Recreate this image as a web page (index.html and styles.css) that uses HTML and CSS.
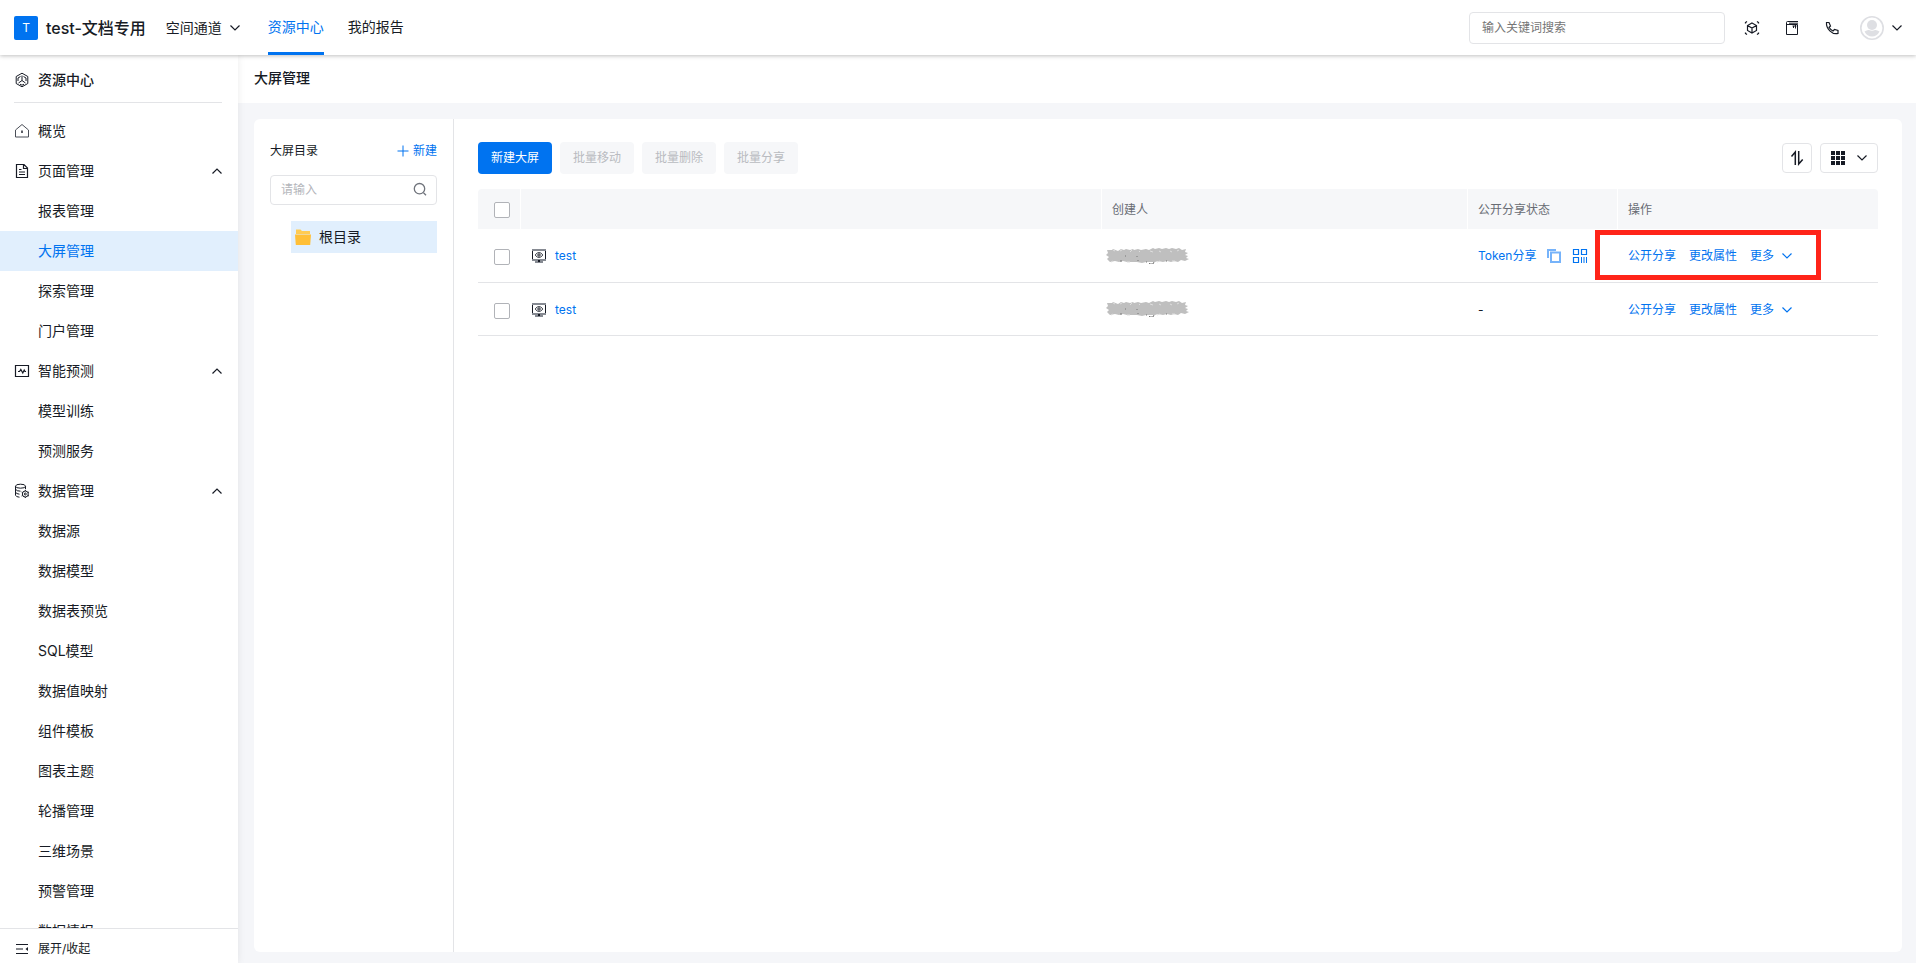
FILE: index.html
```html
<!DOCTYPE html>
<html lang="zh-CN">
<head>
<meta charset="utf-8">
<title>大屏管理</title>
<link rel="stylesheet" href="styles.css">
</head>
<body>
<svg class="sprite" aria-hidden="true">
  <symbol id="down" viewBox="0 0 12 12"><path d="M1.500 3.500 6 8l4.500-4.500"/></symbol>
  <symbol id="up" viewBox="0 0 12 12"><path d="M1.500 8.500 6 4l4.500 4.500"/></symbol>
  <symbol id="screen" viewBox="0 0 16 16"><path d="M1.500 2v10h13V2"/><path d="M1 2h14" stroke="#868a92" stroke-width="2"/><path d="M1 11h14v2h-3v2H4v-2H1z" fill="#868a92" stroke="none"/><path d="M7 12h2v2H7z" fill="#171b25" stroke="none"/><path d="M4.300 7C6 3.800 10 3.800 11.700 7 10 10.200 6 10.200 4.300 7z" stroke="#3b3f48"/><circle cx="8" cy="7" r="1.200"/></symbol>
  <symbol id="scribble" viewBox="0 0 84 16">
    <path fill="#bfbfbf" stroke="none" d="M1 2 6 2l1-1 5 2 3-2 3 1 2-1 4 1 3-1 1 1 4-1 3 1 5-1 3 1 4-2 2 1 4-1 3 1 4-1 3 1 3-1 4 1 3-1 3 2 4-1-1 3 3 1-3 2 3 1-2 2 3 1-4 2-4-1-3 2-4-1-3 1-4-1-4 1-5-1-3 1-4 0-5 0-4 1-5-1-4 0-6 0-4-1-4 1-4-1-5 1-3-3 2-2-3-2 2-2z"/>
    <path stroke="#dedede" d="m7 2 2 1m5 0 2-1m8 2 2-2m7 1 1 1m10-1 3 1m6-1 2 1m9-1 2 1m5-1 2-1M5 14l2-1m14 1 3 0m27 0 3-1m12 0 3 0"/>
    <path stroke="#777" d="M14 13h2m3-5h1m11 0v1m1 3v1m8 1h1m2 1 1 1h3l1-2m12-1h1"/>
  </symbol>
</svg>

<header class="topbar">
  <span class="logo">T</span>
  <span class="brand">test-文档专用</span>
  <button class="space" type="button">空间通道<svg class="icon s12"><use href="#down"/></svg></button>
  <nav class="tabs">
    <a class="tab on" href="#">资源中心</a>
    <a class="tab" href="#">我的报告</a>
  </nav>
  <input class="search" type="text" placeholder="输入关键词搜索" aria-label="输入关键词搜索">
  <div class="tools">
    <button type="button" aria-label="三维"><svg class="icon s16" viewBox="0 0 16 16"><path d="M1.500 3.500V2.500L3 1.500M13 1.500l1.500 1V3.500M1.500 12.500v1l1.500 1M13 14.500l1.500-1V12.500" stroke-width="1.300"/><path d="M8 3l4.500 2.500v5L8 13l-4.500-2.500v-5zM3.500 5.500 8 8l4.500-2.500M8 8v5" stroke-width="1.200"/></svg></button>
    <button type="button" aria-label="文档"><svg class="icon s16" viewBox="0 0 16 16"><path d="M14 1.500H3.500Q2.500 1.500 2.500 2.500v12h11v-10H3M5 3.200h9"/><path d="M8.500 6h4M9.500 8V6M11.500 8.500V5"/></svg></button>
    <button type="button" aria-label="电话"><svg class="icon s16" viewBox="0 0 16 16"><path d="M2.500 2.500h2.500l1.500 3.500-1.500 1.300q1.400 2.400 4 3.700l1.500-1.500 3.500 1v3Q9.500 14.500 5.800 10.800T2.500 2.500z" stroke-width="1.200"/></svg></button>
  </div>
  <button class="user" type="button" aria-label="用户"><svg class="s24" viewBox="0 0 24 24"><circle cx="12" cy="12" r="11.200" fill="#fff" stroke="#dedfe3" stroke-width="1.600"/><circle cx="12" cy="9" r="5" fill="#dedfe3"/><path d="M4.500 15.500q3-2 4.500-1.500 3 1.500 6 0 1.500-.5 4.500 1.500-2.500 5-7.500 5t-7.500-5z" fill="#dedfe3"/></svg><svg class="icon s12"><use href="#down"/></svg></button>
</header>

<div class="body">
  <aside class="side">
    <div class="side-title">
      <svg class="icon s16" viewBox="0 0 16 16"><path d="M8 1.200 13.800 4.500v7L8 14.800 2.200 11.500v-7zM8 3.500V8.500L4.500 11M8 8.500 11.500 11M6.500 4.500 4 6v3M9.500 4.500 12 6v3M6 12.200l2 1 2-1"/></svg>
      <h2>资源中心</h2>
    </div>
    <nav class="menu">
      <a class="item" href="#"><svg class="icon s16" viewBox="0 0 16 16"><path d="M1.500 7 8 1.500 14.500 7v7h-13z" stroke="#4b4f58"/><path d="M8 7.500v2.500" stroke-width="1.400"/></svg>概览</a>
      <a class="item" href="#"><svg class="icon s16" viewBox="0 0 16 16"><path d="M2.500 1.500h7.500l3.500 3.500v9.500h-11zM9.500 1.500v4h4M5 6.500h2.500M5 9h6M5 11.500h6" stroke-width="1.200"/></svg>页面管理<svg class="icon s12 fold"><use href="#up"/></svg></a>
      <a class="item sub" href="#">报表管理</a>
      <a class="item sub on" href="#">大屏管理</a>
      <a class="item sub" href="#">探索管理</a>
      <a class="item sub" href="#">门户管理</a>
      <a class="item" href="#"><svg class="icon s16" viewBox="0 0 16 16"><path d="M1.500 2.500h13v11h-13zM4 8.500h1.500l1.300-2 2 3.500 1.400-3 .8 1.500h1" stroke-width="1.200"/></svg>智能预测<svg class="icon s12 fold"><use href="#up"/></svg></a>
      <a class="item sub" href="#">模型训练</a>
      <a class="item sub" href="#">预测服务</a>
      <a class="item" href="#"><svg class="icon s16" viewBox="0 0 16 16"><ellipse cx="6.500" cy="3.200" rx="5" ry="2"/><path d="M1.500 3.200v9q.5 1.800 4 2M11.500 3.200v3M1.500 6.200q1 2 5 2M1.500 9.200q1 1.800 4 2"/><circle cx="11.300" cy="11" r="3"/><circle cx="11.300" cy="11" r="1"/><path d="M11.300 7v1M11.300 14v1M7.600 9l1 .5M14 12.500l1 .5M7.600 13l1-.5M14 9.500l1-.5"/></svg>数据管理<svg class="icon s12 fold"><use href="#up"/></svg></a>
      <a class="item sub" href="#">数据源</a>
      <a class="item sub" href="#">数据模型</a>
      <a class="item sub" href="#">数据表预览</a>
      <a class="item sub" href="#">SQL模型</a>
      <a class="item sub" href="#">数据值映射</a>
      <a class="item sub" href="#">组件模板</a>
      <a class="item sub" href="#">图表主题</a>
      <a class="item sub" href="#">轮播管理</a>
      <a class="item sub" href="#">三维场景</a>
      <a class="item sub" href="#">预警管理</a>
      <a class="item sub" href="#">数据情报</a>
    </nav>
    <button class="collapse" type="button"><svg class="icon s16" viewBox="0 0 16 16"><path d="M2 3.500h12M2 8h7M2 12.500h12" stroke-width="1.200"/><path d="M14 6v4L11.500 8z" fill="#171b25" stroke="none"/></svg>展开/收起</button>
  </aside>

  <main class="main">
    <h1 class="page-title">大屏管理</h1>
    <div class="card">
      <section class="tree">
        <div class="tree-head">
          <h3>大屏目录</h3>
          <button class="link add" type="button"><svg class="icon s12" viewBox="0 0 12 12"><path d="M6 .5v11M.5 6h11"/></svg>新建</button>
        </div>
        <div class="filter">
          <input type="text" placeholder="请输入" aria-label="请输入">
          <svg class="icon s16" viewBox="0 0 16 16"><circle cx="7.500" cy="6.700" r="5.200"/><path d="m11.500 10.700 2.500 2.500"/></svg>
        </div>
        <a class="node" href="#"><svg class="s16" viewBox="0 0 16 16"><path d="M1 .5h4.500L7 2h8v3H1z" fill="#ffcb52"/><path d="M0 5.500h16L15.200 16H.8z" fill="#ffbf37"/></svg>根目录</a>
      </section>
      <section class="content">
        <div class="toolbar">
          <button class="btn primary" type="button">新建大屏</button>
          <button class="btn" type="button" disabled>批量移动</button>
          <button class="btn" type="button" disabled>批量删除</button>
          <button class="btn" type="button" disabled>批量分享</button>
          <button class="tool first" type="button" aria-label="排序"><svg class="icon s16" viewBox="0 0 16 16"><path d="M6.300 15V2L2.500 6.500M9.700 1v13l4-4.500" stroke-width="1.500"/></svg></button>
          <button class="tool view" type="button" aria-label="视图"><svg class="s16" viewBox="0 0 16 16" fill="#171b25"><path d="M1 1h4v4H1zM6 1h4v4H6zM11 1h4v4h-4zM1 6h4v4H1zM6 6h4v4H6zM11 6h4v4h-4zM1 11h4v4H1zM6 11h4v4H6zM11 11h4v4h-4z"/></svg><svg class="icon s12"><use href="#down"/></svg></button>
        </div>
        <table class="grid">
          <colgroup><col class="c-check"><col><col class="c-owner"><col class="c-state"><col class="c-ops"></colgroup>
          <thead>
            <tr><th><input type="checkbox" aria-label="全选"></th><th></th><th>创建人</th><th>公开分享状态</th><th>操作</th></tr>
          </thead>
          <tbody>
            <tr>
              <td><input type="checkbox" aria-label="选择 test"></td>
              <td><a class="name" href="#"><svg class="icon s16"><use href="#screen"/></svg>test</a></td>
              <td class="owner"><svg class="icon masked"><use href="#scribble"/></svg></td>
              <td><div class="state"><a href="#">Token分享</a><svg class="s16" viewBox="0 0 16 16"><path d="M1 1h9v2H3v7H1z" fill="#76b3fa"/><path d="M5 4.500h9V14H5z" fill="none" stroke="#76b3fa" stroke-width="2"/></svg><svg class="icon s16" viewBox="0 0 16 16"><path d="M1.500 1.500h5v5h-5zM9.500 1.500h5v5h-5zM1.500 9.500h5v5h-5z" stroke-width="1.200"/><path d="M9.500 9v6M12 9v6M14.500 9v6"/></svg></div></td>
              <td class="marked"><div class="ops"><a href="#">公开分享</a><a href="#">更改属性</a><button class="link" type="button">更多<svg class="icon s12"><use href="#down"/></svg></button></div></td>
            </tr>
            <tr>
              <td><input type="checkbox" aria-label="选择 test"></td>
              <td><a class="name" href="#"><svg class="icon s16"><use href="#screen"/></svg>test</a></td>
              <td class="owner"><svg class="icon masked"><use href="#scribble"/></svg></td>
              <td>-</td>
              <td><div class="ops"><a href="#">公开分享</a><a href="#">更改属性</a><button class="link" type="button">更多<svg class="icon s12"><use href="#down"/></svg></button></div></td>
            </tr>
          </tbody>
        </table>
      </section>
    </div>
  </main>
</div>
</body>
</html>
```
FILE: styles.css
```css
*, *::before, *::after { box-sizing: border-box; }
body {
  margin: 0;
  height: 100vh;
  display: flex;
  flex-direction: column;
  overflow: hidden;
  font: 12px/20px Inter, "Noto Sans CJK SC", sans-serif;
  color: #171b25;
  background: #f5f6f9;
}
h1, h2, h3 { margin: 0; font-weight: 500; }
a { color: inherit; text-decoration: none; }
button { margin: 0; padding: 0; border: 0; background: none; font: inherit; color: inherit; cursor: pointer; }
input { font: inherit; color: inherit; outline: 0; }
svg { display: block; flex: none; }
.sprite { position: absolute; width: 0; height: 0; }
.icon { fill: none; stroke: currentColor; }
.s12 { width: 12px; height: 12px; stroke-width: 1.2; }
.s16 { width: 16px; height: 16px; }
.s24 { width: 24px; height: 24px; }

.topbar {
  position: relative;
  z-index: 2;
  flex: none;
  display: flex;
  align-items: center;
  height: 55px;
  padding: 0 13px 0 14px;
  background: #fff;
  box-shadow: 0 1px 4px rgba(0, 0, 0, .25);
}
.logo {
  width: 24px;
  height: 24px;
  border-radius: 2px;
  background: #0073f0;
  color: #fff;
  line-height: 24px;
  text-align: center;
}
.brand { margin-left: 8px; font-size: 16px; font-weight: 500; }
.space { display: flex; align-items: center; gap: 7px; margin-left: 20px; font-size: 14px; }
.tabs { display: flex; gap: 24px; margin-left: 27px; align-self: stretch; font-size: 14px; }
.tab { line-height: 52px; padding-top: 1px; height: 55px; border-bottom: 3px solid transparent; }
.tab.on { color: #0073f0; border-color: #0073f0; }
.search {
  width: 256px;
  height: 32px;
  margin-left: auto;
  padding: 0 12px;
  border: 1px solid #e3e4e7;
  border-radius: 4px;
}
.search::placeholder { color: #757575; }
.tools { display: flex; gap: 24px; margin: 0 20px 0 19px; }
.user { display: flex; align-items: center; gap: 7px; }

.body { flex: 1; display: flex; min-height: 0; }
.side {
  position: relative;
  z-index: 1;
  flex: none;
  display: flex;
  flex-direction: column;
  width: 238px;
  background: #fff;
  box-shadow: 0 0 8px rgba(0, 0, 0, .08);
}
.side-title {
  display: flex;
  align-items: center;
  gap: 8px;
  height: 48px;
  margin: 0 16px 8px 14px;
  padding-top: 2px;
  border-bottom: 1px solid #e3e4e7;
}
.side-title h2 { font-size: 14px; }
.menu { flex: 1; min-height: 0; overflow: hidden; font-size: 14px; }
.item { display: flex; align-items: center; gap: 8px; height: 40px; padding: 0 15px 0 14px; }
.item.sub { padding-left: 38px; }
.item.on { color: #0073f0; background: #e1effd; }
.item .fold { margin: 0 0 0 auto; }
.collapse {
  display: flex;
  align-items: center;
  gap: 8px;
  height: 35px;
  padding: 6px 14px 0;
  border-top: 1px solid #e3e4e7;
}

.main { flex: 1; min-width: 0; display: flex; flex-direction: column; }
.page-title { height: 48px; padding-left: 16px; background: #fff; font-size: 14px; line-height: 46px; }
.card {
  flex: 1;
  min-height: 0;
  display: flex;
  margin: 16px 14px 11px 16px;
  border-radius: 6px;
  background: #fff;
}
.tree { flex: none; width: 200px; padding: 22px 16px; border-right: 1px solid #e3e4e7; }
.tree-head { display: flex; align-items: center; justify-content: space-between; }
.tree-head h3 { font-size: 12px; font-weight: 400; }
.link { display: flex; align-items: center; color: #0073f0; }
.add { gap: 4px; }
.add .icon { stroke-width: 1; }
.filter {
  display: flex;
  align-items: center;
  height: 30px;
  margin: 14px 0 16px;
  padding: 0 8px 0 10px;
  border: 1px solid #e3e4e7;
  border-radius: 4px;
}
.filter input { flex: 1; min-width: 0; padding: 0; border: 0; }
.filter input::placeholder { color: #b4b6bb; }
.filter .icon { color: #6f737b; stroke-width: 1.3; }
.node {
  display: flex;
  align-items: center;
  gap: 8px;
  height: 32px;
  margin-left: 21px;
  padding: 0 4px;
  background: #e1effd;
  font-size: 14px;
}

.content { flex: 1; min-width: 0; padding: 23px 24px; }
.toolbar { display: flex; align-items: center; gap: 8px; margin-bottom: 15px; }
.btn { height: 32px; padding: 0 13px; border-radius: 4px; }
.btn.primary { background: #0073f0; color: #fff; }
.btn:disabled { background: #f6f7f9; color: #b9bbc0; }
.tool {
  display: flex;
  align-items: center;
  justify-content: center;
  width: 30px;
  height: 30px;
  border: 1px solid #e3e4e7;
  border-radius: 4px;
}
.tool.first { margin-left: auto; }
.tool.view { width: 58px; gap: 10px; }

.grid { width: 100%; table-layout: fixed; border-collapse: separate; border-spacing: 0; }
.c-check { width: 43px; }
.c-owner { width: 366px; }
.c-state { width: 150px; }
.c-ops { width: 260px; }
.grid th {
  height: 40px;
  padding: 1px 10px 0;
  border-right: 1px solid #fff;
  background: #f6f7f9;
  color: #686c74;
  font-weight: 400;
  text-align: left;
}
.grid th:first-child { border-radius: 4px 0 0; }
.grid th:last-child { border-right: 0; border-radius: 0 4px 0 0; }
.grid td { height: 53px; padding: 1px 10px 0; border-bottom: 1px solid #e3e4e7; }
.grid tbody tr:first-child td { height: 54px; }
.grid th:first-child { padding: 2px 0 0 16px; }
.grid td:first-child { padding: 3px 0 0 16px; }
.grid input {
  display: block;
  appearance: none;
  width: 16px;
  height: 16px;
  margin: 0;
  border: 1px solid #b1b3b8;
  border-radius: 2px;
  background: #fff;
}
.name { display: flex; align-items: center; gap: 8px; color: #0073f0; }
.name .icon { color: #171b25; }
.grid td.owner { padding: 0 0 0 4px; }
.masked { width: 84px; height: 16px; }
.state { display: flex; align-items: center; gap: 10px; color: #0073f0; }
.ops { display: flex; align-items: center; gap: 13px; color: #0073f0; }
.ops .link { gap: 7px; }
.marked { position: relative; }
.marked::after {
  content: "";
  position: absolute;
  left: -23px;
  top: 1px;
  width: 226px;
  height: 50px;
  border: 5px solid #ff2419;
}
```
